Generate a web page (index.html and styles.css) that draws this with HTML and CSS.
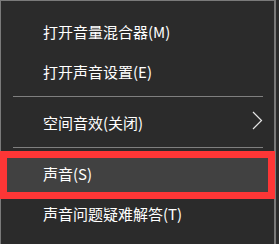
FILE: index.html
```html
<!DOCTYPE html>
<html lang="zh-CN">
<head>
    <meta charset="utf-8">
    <title>声音菜单</title>
    <link rel="stylesheet" href="styles.css">
</head>
<body>
    <div class="menu">
        <div class="item">打开音量混合器(M)</div>
        <div class="item">打开声音设置(E)</div>
        <div class="sep"></div>
        <div class="item">
            <span>空间音效(关闭)</span>
            <svg class="arrow" width="11" height="19" viewBox="0 0 11 19">
                <polyline points="1,1 9.5,9.5 1,18" fill="none" stroke="#e6e6e6" stroke-width="1.2"/>
            </svg>
        </div>
        <div class="sep"></div>
        <div class="item active">声音(S)</div>
        <div class="item">声音问题疑难解答(T)</div>
        <div class="mark"></div>
    </div>
</body>
</html>
```

FILE: styles.css
```css
body {
    margin: 0;
    background-color: #2b2b2b;
    font-family: "Noto Sans CJK SC", "Noto Sans", sans-serif;
}

.menu {
    position: relative;
    width: 276px;
    min-height: 243px;
    padding: 10px 0 12px;
    box-sizing: border-box;
    background-color: #2b2b2b;
    border-top: 1px solid #7a7a7a;
    border-left: 1px solid #7a7a7a;
    border-right: 2px solid #7a7a7a;
}

.item {
    display: flex;
    align-items: center;
    height: 40px;
    padding: 0 11px 0 42px;
    font-size: 15px;
    color: #fff;
}

.item.active {
    margin-right: 2px;
    background-color: #414141;
}

.arrow {
    margin-left: auto;
    margin-top: -3px;
}

.sep {
    height: 1px;
    margin: 5px 11px 5px 12px;
    background-color: #7f7f7f;
}

.mark {
    position: absolute;
    left: -1px;
    top: 150px;
    width: 275px;
    height: 48px;
    box-sizing: border-box;
    border: 7px solid #fd3636;
}
```
